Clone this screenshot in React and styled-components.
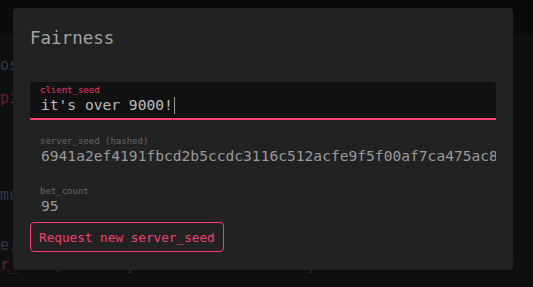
import styled, { createGlobalStyle } from "styled-components";

const GlobalStyle = createGlobalStyle`
  html, body {
    margin: 0;
    padding: 0;
    background: #0f0f0f;
    font-family: "DejaVu Sans Mono", "Liberation Mono", monospace;
  }
`;

const Page = styled.div`
  position: relative;
  width: 533px;
  height: 287px;
  overflow: hidden;
  background: #0f0f0f;
`;

const TopBand = styled.div`
  height: 35px;
  background: #0a0a0a;
`;

const BgText = styled.div`
  display: flex;
  flex-direction: column;
  font-size: 15px;
  line-height: 16px;
  color: #313a44;
  white-space: pre;
`;

const BgLine = styled.div`
  margin-top: ${(p) => p.$gap || 0}px;
  color: ${(p) => (p.$pink ? "#6a1c38" : "inherit")};
`;

const Dim = styled.span`
  color: #252a30;
`;

const Dialog = styled.div`
  position: absolute;
  top: 8px;
  left: 13px;
  width: 500px;
  height: 262px;
  box-sizing: border-box;
  padding: 18px 17px;
  background: #222222;
  border-radius: 4px;
  display: flex;
  flex-direction: column;
`;

const Title = styled.h2`
  margin: 0;
  font-size: 17.5px;
  line-height: 24px;
  font-weight: normal;
  color: #a3a3a3;
`;

const InputBox = styled.div`
  margin-top: 32px;
  padding: 3px 10px 4px;
  background: #111111;
  border-radius: 4px 4px 0 0;
  border-bottom: 2px solid #ff3d6e;
`;

const Field = styled.div`
  margin-top: ${(p) => p.$gap}px;
  padding: 3px 0 4px 10px;
  overflow: hidden;
`;

const Label = styled.div`
  font-size: 9px;
  line-height: 11px;
  color: ${(p) => (p.$active ? "#e8356b" : "#666666")};
`;

const Value = styled.div`
  font-size: 14.6px;
  line-height: 18px;
  padding-left: 1px;
  color: ${(p) => (p.$active ? "#bdbdbd" : "#9a9a9a")};
  white-space: nowrap;
  overflow: hidden;
`;

const Caret = styled.span`
  display: inline-block;
  width: 1px;
  height: 17px;
  margin-left: 1px;
  vertical-align: -4px;
  background: #9a9a9a;
`;

const Button = styled.button`
  align-self: flex-start;
  margin-top: 4px;
  height: 30px;
  padding: 0 8px;
  background: transparent;
  border: 1px solid #ff3d6e;
  border-radius: 4px;
  color: #f0426f;
  font-family: "DejaVu Sans Mono", "Liberation Mono", monospace;
  font-size: 12.7px;
  cursor: pointer;
`;

export default function App() {
  return (
    <Page>
      <GlobalStyle />
      <TopBand />
      <BgText>
        <BgLine $gap={22}>os</BgLine>
        <BgLine $gap={17} $pink>pi</BgLine>
        <BgLine $gap={8}>  t</BgLine>
        <BgLine $gap={57}>mu</BgLine>
        <BgLine $gap={34}>e,</BgLine>
        <BgLine $gap={4} $pink>
          r_seed<Dim>, which you can use to verify the results were fair</Dim>
        </BgLine>
      </BgText>
      <Dialog>
        <Title>Fairness</Title>
        <InputBox>
          <Label $active>client_seed</Label>
          <Value $active>
            it's over 9000!<Caret />
          </Value>
        </InputBox>
        <Field $gap={13}>
          <Label>server_seed (hashed)</Label>
          <Value>6941a2ef4191fbcd2b5ccdc3116c512acfe9f5f00af7ca475ac8e1d07b3a9c52</Value>
        </Field>
        <Field $gap={14}>
          <Label>bet_count</Label>
          <Value>95</Value>
        </Field>
        <Button>Request new server_seed</Button>
      </Dialog>
    </Page>
  );
}
